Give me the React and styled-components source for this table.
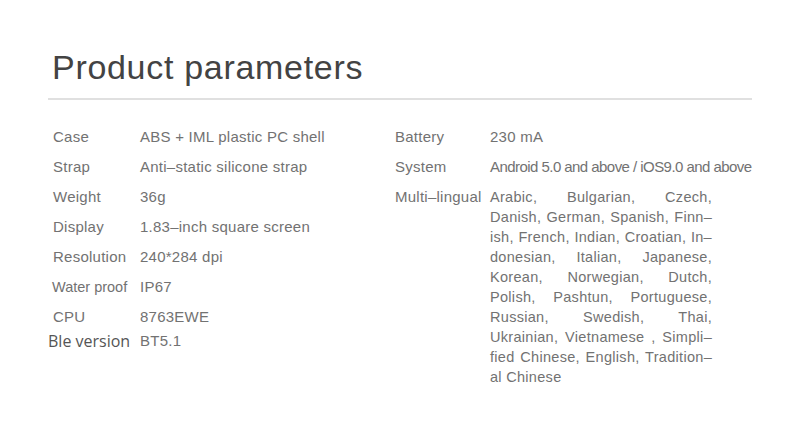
import styled, { createGlobalStyle } from "styled-components";

const left = [
  { label: "Case", value: "ABS + IML plastic PC shell" },
  { label: "Strap", value: "Anti–static silicone strap" },
  { label: "Weight", value: "36g" },
  { label: "Display", value: "1.83–inch square screen" },
  { label: "Resolution", value: "240*284 dpi" },
  { label: "Water proof", value: "IP67", small: true },
  { label: "CPU", value: "8763EWE" },
  { label: "Ble version", value: "BT5.1", odd: true },
];

const langs = [
  "Arabic, Bulgarian, Czech,",
  "Danish, German, Spanish, Finn–",
  "ish, French, Indian, Croatian, In–",
  "donesian, Italian, Japanese,",
  "Korean, Norwegian, Dutch,",
  "Polish, Pashtun, Portuguese,",
  "Russian, Swedish, Thai,",
  "Ukrainian, Vietnamese , Simpli–",
  "fied Chinese, English, Tradition–",
  "al Chinese",
];

export default function App() {
  return (
    <>
      <Global />
      <Page>
        <Titulo>Product parameters</Titulo>
        <Linha />
        <Colunas>
          <Coluna>
            {left.map((r) => (
              <Row key={r.label} $odd={r.odd}>
                <Label $small={r.small} $odd={r.odd}>
                  {r.label}
                </Label>
                <Valor>{r.value}</Valor>
              </Row>
            ))}
          </Coluna>
          <ColunaDireita>
            <Row>
              <LabelDir>Battery</LabelDir>
              <Valor>230 mA</Valor>
            </Row>
            <Row>
              <LabelDir>System</LabelDir>
              <Valor $tight>Android 5.0 and above / iOS9.0 and above</Valor>
            </Row>
            <Row>
              <LabelDir>Multi–lingual</LabelDir>
              <Idiomas>
                {langs.map((l, i) => (
                  <LinhaIdioma key={i} $last={i === langs.length - 1}>
                    {l}
                  </LinhaIdioma>
                ))}
              </Idiomas>
            </Row>
          </ColunaDireita>
        </Colunas>
      </Page>
    </>
  );
}

const Global = createGlobalStyle`
  body {
    margin: 0;
    background: #ffffff;
    font-family: "Liberation Sans", Arial, sans-serif;
  }
`;

const Page = styled.div`
  width: 800px;
  height: 438px;
  padding: 50px 0 0 48px;
  box-sizing: border-box;
`;

const Titulo = styled.h1`
  margin: 0 0 0 4px;
  font-family: "Liberation Sans", Arial, sans-serif;
  font-weight: 400;
  font-size: 34px;
  line-height: 34px;
  letter-spacing: 0.7px;
  color: #434343;
`;

const Linha = styled.div`
  margin-top: 14px;
  width: 704px;
  height: 2px;
  background: #e0e0e0;
`;

const Colunas = styled.div`
  display: flex;
  margin-top: 22px;
`;

const Coluna = styled.div`
  width: 342px;
  padding-left: 5px;
  display: flex;
  flex-direction: column;
`;

const ColunaDireita = styled.div`
  display: flex;
  flex-direction: column;
`;

const Row = styled.div`
  display: flex;
  align-items: flex-start;
  line-height: 30px;
  font-size: 15px;
  letter-spacing: 0.25px;
  color: #727272;
  margin-top: ${(p) => (p.$odd ? "-6px" : "0")};
`;

const Label = styled.div`
  width: ${(p) => (p.$odd ? "92px" : p.$small ? "88px" : "87px")};
  margin-left: ${(p) => (p.$odd ? "-5px" : p.$small ? "-1px" : "0")};
  font-family: ${(p) =>
    p.$odd ? '"Open Sans", sans-serif' : '"Liberation Sans", Arial, sans-serif'};
  font-size: ${(p) => (p.$odd ? "16px" : p.$small ? "14.5px" : "15px")};
  letter-spacing: ${(p) => (p.$odd || p.$small ? "0" : "0.25px")};
  color: ${(p) => (p.$odd ? "#555" : "#727272")};
  white-space: nowrap;
`;

const LabelDir = styled.div`
  width: 95px;
  white-space: nowrap;
`;

const Valor = styled.div`
  white-space: nowrap;
  letter-spacing: ${(p) => (p.$tight ? "-0.55px" : "0.25px")};
`;

const Idiomas = styled.div`
  width: 222px;
  padding-top: 5px;
  font-size: 14.5px;
  line-height: 20px;
  letter-spacing: 0.3px;
`;

const LinhaIdioma = styled.div`
  text-align: ${(p) => (p.$last ? "left" : "justify")};
  text-align-last: ${(p) => (p.$last ? "left" : "justify")};
  white-space: nowrap;
`;
